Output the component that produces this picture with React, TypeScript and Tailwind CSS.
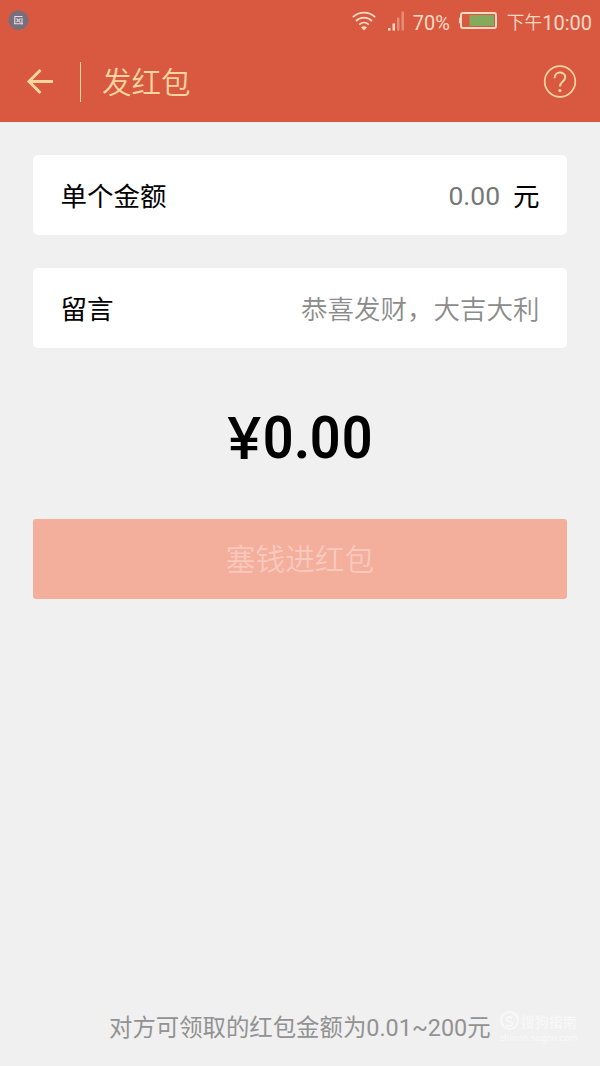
import React from 'react';

function StatusBar() {
  return (
    <div className="flex h-[41px] items-center justify-between pl-2 pr-[8px] text-[#fbd9c5]">
      {/* Notification dot */}
      <svg width="21" height="21" viewBox="0 0 21 21" fill="none">
        <circle cx="10.500" cy="10.300" r="10" fill="#796e7b" />
        <path d="M6.500 6.500H14.500M6.800 6.500V14M6 13.800H15M14 8V14.500" stroke="#e6dfe5" strokeWidth="1.100" />
        <path d="M8.500 8.500L12.500 12.500M12.500 8.500L8.500 12" stroke="#dcd2d8" strokeWidth="1.200" />
      </svg>

      <div className="flex items-center pt-[2px] font-['Roboto','Noto_Sans_CJK_SC',sans-serif] text-[20px] leading-none">
        <svg className="mr-[12px]" width="24" height="21" viewBox="0 0 24 21" fill="none" stroke="currentColor" strokeWidth="1.800">
          <path d="M.8 6.200C7 .2 17 .2 23.200 6.200" />
          <path d="M4 10C8.500 5.600 15.500 5.600 20 10" />
          <path d="M7.200 13.600C10 11 14 11 16.800 13.600" />
          <path d="M9 16.200C11 14.800 13 14.800 15 16.200L12 19.600Z" fill="currentColor" stroke="none" />
        </svg>
        <svg className="mr-[8px]" width="17" height="21" viewBox="0 0 17 21" fill="currentColor">
          <rect x="0" y="17" width="2.500" height="2.500" />
          <rect x="4.500" y="12.500" width="2.500" height="7" />
          <rect x="9" y="6.500" width="2.500" height="13" opacity=".4" />
          <rect x="13.500" y=".5" width="2.500" height="19" opacity=".4" />
        </svg>
        <span className="mr-[9px] w-[37px] whitespace-nowrap pt-[2px]">70%</span>
        <svg className="mr-[9px]" width="39" height="19" viewBox="0 0 39 19" fill="none">
          <rect x="2" y="1" width="35" height="15" rx="2" stroke="currentColor" strokeWidth="2" />
          <rect x="0" y="5.500" width="2" height="6" rx="1" fill="currentColor" />
          <rect x="10.500" y="3" width="24.500" height="11" fill="#84aa5c" />
        </svg>
        <span className="flex items-center whitespace-nowrap">
          <span className="pt-[4px] text-[17.700px] font-[350]">下午</span>
          <span className="pt-[2px]">10:00</span>
        </span>
      </div>
    </div>
  );
}

function Header() {
  return (
    <div className="flex h-[81px] items-center pl-[26px] pr-[23px] text-[#fcd4a0]">
      <svg width="28" height="26" viewBox="0 0 28 26" fill="none" stroke="currentColor" strokeWidth="3">
        <path d="M27 12.500H3M14.500 1L3 12.500L14.500 24" />
      </svg>
      <div className="ml-[26px] h-[40px] w-px bg-[#fcd4a0]" />
      <h1 className="ml-[21px] flex-1 pb-[2px] font-['Noto_Sans_CJK_SC',sans-serif] text-[29.500px] font-[350] leading-none">发红包</h1>
      <svg width="34" height="34" viewBox="0 0 34 34" fill="none" stroke="currentColor">
        <circle cx="17" cy="16.500" r="15.300" strokeWidth="1.700" />
        <path d="M11.500 13.300C11.500 5.700 22.300 5.900 22.300 12.300C22.300 16.400 16.900 16.700 16.900 21.500" strokeWidth="2" />
        <circle cx="16.900" cy="25.600" r="1.600" fill="currentColor" stroke="none" />
      </svg>
    </div>
  );
}

function Total() {
  return (
    <div className="mt-[49px] flex h-[80px] items-center justify-center pt-px text-[60px] font-semibold leading-none text-black">
      <span className="flex w-[36px] justify-center font-['Inter',sans-serif] text-[58px] font-medium">
        <span className="scale-x-[1.08]">¥</span>
      </span>
      <span className="flex w-[32px] justify-center"><span className="scale-x-90">0</span></span>
      <span className="flex w-[15px] justify-center">.</span>
      <span className="flex w-[32px] justify-center"><span className="scale-x-90">0</span></span>
      <span className="flex w-[32px] justify-center"><span className="scale-x-90">0</span></span>
    </div>
  );
}

export default function App() {
  return (
    <div className="flex h-[1066px] w-[600px] flex-col overflow-hidden bg-[#f0f0f0] font-['Roboto','Noto_Sans_CJK_SC',sans-serif]">
      <header className="h-[122px] shrink-0 bg-[#d85940]">
        <StatusBar />
        <Header />
      </header>

      <main className="flex flex-1 flex-col px-[33.400px] pt-[32.500px]">
        {/* Amount */}
        <div className="flex h-[80px] items-center justify-between rounded-[5px] bg-white px-[27px] pt-[4px] text-[26.500px] text-black">
          <span>单个金额</span>
          <div className="flex items-center">
            <span className="mr-[13px] pb-[2px] text-[#777777]">0.00</span>
            <span>元</span>
          </div>
        </div>

        {/* Message */}
        <div className="mt-[33.500px] flex h-[80px] items-center justify-between rounded-[5px] bg-white px-[27px] pt-[3px] text-[26.500px] text-black">
          <span>留言</span>
          <span className="font-[350] text-[#8c8c8c]">恭喜发财，大吉大利</span>
        </div>

        <Total />

        <button className="mt-[41.500px] h-[80px] rounded-[3px] bg-[#f3ae9c] pt-[3px] text-[29.700px] font-[350] text-[#f8c9bc]">
          塞钱进红包
        </button>
      </main>

      <footer className="flex h-[78px] shrink-0 items-center pl-[109px] pt-[3px] text-[23.400px] text-[#929292]">
        <span className="whitespace-nowrap">对方可领取的红包金额为0.01~200元</span>
        <div className="ml-[9px] w-[80px] pb-[4px] font-['Noto_Sans_CJK_SC',sans-serif] text-[#f8f8f8]">
          <div className="flex items-center gap-[2px]">
            <span className="flex h-[19px] w-[19px] shrink-0 items-center justify-center rounded-full border-2 border-[#f8f8f8] text-[15px] font-bold leading-none">S</span>
            <span className="whitespace-nowrap text-[14px] font-medium leading-[20px]">搜狗指南</span>
          </div>
          <div className="whitespace-nowrap text-[9.200px] leading-[12px]">zhinan.sogou.com</div>
        </div>
      </footer>
    </div>
  );
}
